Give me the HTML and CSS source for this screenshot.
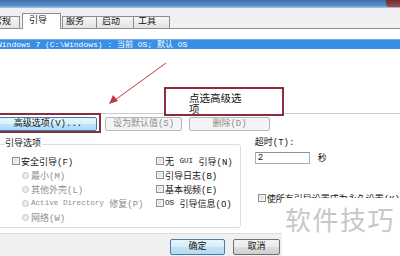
FILE: index.html
```html
<!DOCTYPE html>
<html>
<head>
<meta charset="utf-8">
<title>系统配置 - 引导</title>
<link rel="stylesheet" href="styles.css">
</head>
<body>
<div class="window">
  <div class="titlebar"><span class="close"></span></div>
  <div class="tabstrip">
    <div class="tab t1">常规</div>
    <div class="tab sel">引导</div>
    <div class="tab t3">服务</div>
    <div class="tab t4">启动</div>
    <div class="tab t5">工具</div>
  </div>
  <div class="panel">
    <div class="listbox">
      <div class="row-sel">Windows 7 (C:\Windows) : 当前 OS; 默认 OS</div>
    </div>
    <div class="btnrow">
      <div class="btn hot adv">高级选项(V)...</div>
      <div class="btn dis def">设为默认值(S)</div>
      <div class="btn dis del">删除(D)</div>
    </div>
    <div class="lower">
      <fieldset class="group">
        <legend>引导选项</legend>
        <div class="cols">
          <div class="col left">
            <div class="opt"><span class="chk"></span>安全引导(F)</div>
            <div class="opt sub dis"><span class="rad"></span>最小(M)</div>
            <div class="opt sub dis"><span class="rad"></span>其他外壳(L)</div>
            <div class="opt sub dis"><span class="rad"></span><span class="ad">Active Directory</span>&nbsp;修复(P)</div>
            <div class="opt sub dis"><span class="rad"></span>网络(W)</div>
          </div>
          <div class="col right">
            <div class="opt"><span class="chk"></span>无&nbsp;<span class="sm">GUI</span>&nbsp;引导(N)</div>
            <div class="opt"><span class="chk"></span>引导日志(B)</div>
            <div class="opt"><span class="chk"></span>基本视频(E)</div>
            <div class="opt"><span class="chk"></span><span class="sm">OS</span>&nbsp;引导信息(O)</div>
          </div>
        </div>
      </fieldset>
      <div class="side">
        <div class="lbl">超时(T):</div>
        <div class="timeout"><span class="input">2</span><span class="sec">秒</span></div>
        <div class="opt perm"><span class="chk"></span>使所有引导设置成为永久设置(K)</div>
      </div>
    </div>
  </div>
  <div class="footer">
    <div class="btn ok">确定</div>
    <div class="btn cancel">取消</div>
  </div>

  <svg class="arrow" width="400" height="256" viewBox="0 0 400 256">
    <line x1="166" y1="63" x2="115" y2="100" stroke="#c0393b" stroke-width="1"/>
    <polygon points="109,104 113,95 118,101" fill="#c0393b"/>
  </svg>
  <div class="note"><span class="note-text">点选高级选项</span></div>
  <div class="hl"></div>
  <div class="wm">软件技巧</div>
</div>
</body>
</html>
```

FILE: styles.css
```css
* { box-sizing: border-box; }
html, body { margin: 0; padding: 0; }
body { width: 400px; height: 256px; overflow: hidden; background: #fff; }

.window {
  position: relative;
  width: 400px;
  height: 256px;
  overflow: hidden;
  font-family: "Liberation Mono", "Noto Sans CJK SC", monospace;
  font-size: 9px;
  color: #151515;
}

.titlebar {
  height: 8px;
  background: linear-gradient(#3a71ab, #5a90c8 70%, #a9c7e5);
  display: flex;
  justify-content: flex-end;
}
.close {
  width: 14px;
  height: 7px;
  background: linear-gradient(#6e2c30, #a0504e);
  border-radius: 0 0 0 3px;
}

.tabstrip {
  height: 21px;
  background: linear-gradient(#eceff3, #f2f2f2);
  border-bottom: 1px solid #8c8e94;
  display: flex;
  align-items: flex-end;
}
.tab {
  height: 12px;
  border: 1px solid #8c8e94;
  border-bottom: none;
  background: linear-gradient(#f6f6f6, #e3e3e3);
  line-height: 10px;
  padding-left: 4px;
  white-space: nowrap;
  overflow: hidden;
}
.t1 { width: 36px; margin-left: -16px; padding-left: 0; text-align: center; }
.sel {
  width: 39px;
  height: 16px;
  margin-left: 2px;
  margin-bottom: -1px;
  background: #fff;
  line-height: 14px;
  padding-left: 6px;
}
.t3 { width: 35px; margin-left: 1px; padding-left: 3px; }
.t4 { width: 38px; margin-left: -1px; padding-left: 5px; }
.t5 { width: 37px; margin-left: -1px; padding-left: 4px; }

.panel { height: 204px; background: #fff; }

.listbox {
  height: 85px;
  padding-top: 10px;
  border-bottom: 1px solid #c9c9c9;
}
.row-sel {
  height: 10px;
  line-height: 10px;
  background: #3a8ee4;
  border-top: 1px solid #6aaaf0;
  color: #fff;
  font-size: 8px;
  text-indent: -3px;
  white-space: nowrap;
}

.btnrow {
  margin-top: 3px;
  height: 14px;
  display: flex;
}
.btn {
  height: 14px;
  border: 1px solid #707070;
  border-radius: 2px;
  text-align: center;
  line-height: 12px;
  white-space: nowrap;
  background: linear-gradient(#f3f3f3, #ebebeb 50%, #dddddd 51%, #cfcfcf);
}
.hot {
  border-color: #3c7fb1;
  background: linear-gradient(#eaf6fd, #d9f0fc 50%, #bee6fd 51%, #a7d9f5);
}
.btn.dis {
  border-color: #b5b8bb;
  background: #f4f4f4;
  color: #8d8d8d;
}
.adv { width: 98px; margin-left: -1px; }
.def { width: 77px; margin-left: 8px; }
.del { width: 81px; margin-left: 7px; }

.lower {
  margin-top: 8px;
  display: flex;
  align-items: flex-start;
}
.group {
  margin: 0 0 0 -2px;
  padding: 5px 0 3px 0;
  width: 270px;
  min-width: 0;
  border: 1px solid #d5dfe5;
  border-radius: 3px;
}
.group legend {
  margin-left: 5px;
  padding: 0 1px;
  height: 10px;
  line-height: 10px;
}
.cols {
  display: grid;
  grid-template-columns: 157px 1fr;
}
.opt {
  height: 14px;
  display: flex;
  align-items: center;
  white-space: nowrap;
}
.left .opt { padding-left: 13px; }
.left .opt.sub { padding-left: 23px; }
.dis { color: #8d8d8d; }
.chk {
  width: 8px;
  height: 8px;
  border: 1px solid #8e8f8f;
  background: linear-gradient(135deg, #d6d6d6, #f7f7f7);
  box-shadow: inset 0 0 0 1px #f4f4f4;
  margin-right: 1px;
  flex: none;
}
.rad {
  width: 7px;
  height: 7px;
  border: 1px solid #c3c3c3;
  border-radius: 50%;
  background: #ededed;
  margin-right: 2px;
  flex: none;
}
.ad { font-size: 7.6px; }
.sm { font-size: 7.6px; }

.side { margin-left: 14px; }
.lbl { height: 9px; line-height: 9px; }
.timeout {
  margin-top: 3px;
  display: flex;
  align-items: center;
}
.input {
  width: 55px;
  height: 12px;
  border: 1px solid #abadb3;
  border-top-color: #8e9095;
  line-height: 10px;
  padding-left: 2px;
}
.sec { margin-left: 8px; }
.perm { margin-top: 27px; padding-left: 3px; }

.footer {
  height: 23px;
  border-top: 1px solid #dcdcdc;
  background: #f0f0f0;
  display: flex;
  padding: 5px 0 0 170px;
  gap: 8px;
}
.footer .btn { height: 16px; line-height: 14px; }
.ok {
  width: 55px;
  border-color: #3c7fb1;
  background: linear-gradient(#e8f4fb, #d6ecf8 50%, #c2e2f4 51%, #b4dbf1);
}
.cancel { width: 47px; }

.arrow { position: absolute; left: 0; top: 0; pointer-events: none; }

.note {
  position: absolute;
  left: 164px;
  top: 87px;
  width: 120px;
  height: 29px;
  border: 2px solid #8c2c3d;
  background: #fff;
  padding: 3px 0 0 23px;
  font-family: "Noto Sans CJK SC", sans-serif;
  font-size: 10.5px;
  line-height: 11px;
  color: #111;
}
.note-text { display: block; width: 56px; }

.hl {
  position: absolute;
  left: -2px;
  top: 113px;
  width: 103px;
  height: 20px;
  border: 2px solid #8c2c3d;
}

.wm {
  position: absolute;
  left: 282px;
  top: 198px;
  width: 118px;
  height: 58px;
  background: #fff;
  padding: 8px 0 0 3px;
  font-family: "Noto Sans CJK SC", sans-serif;
  font-size: 26px;
  line-height: 26px;
  letter-spacing: 1.5px;
  color: #c8c8c8;
  white-space: nowrap;
}
```
